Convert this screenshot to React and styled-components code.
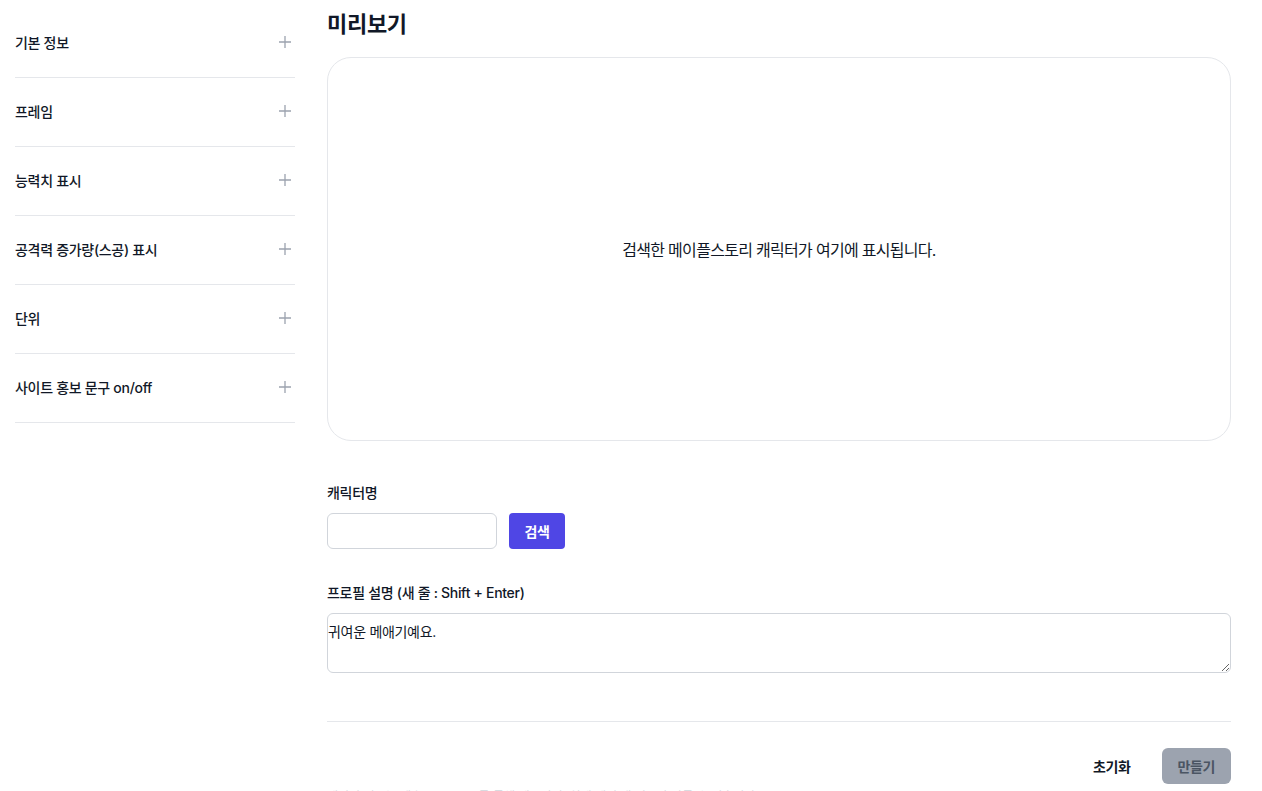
import React, { useState } from 'react';
import styled, { createGlobalStyle } from 'styled-components';

const GlobalStyle = createGlobalStyle`
  body {
    margin: 0;
    background: #fff;
    color: #111827;
    font-family: Inter, "Noto Sans CJK KR", "Noto Sans", sans-serif;
  }
  * { box-sizing: border-box; }
`;

const Layout = styled.div`
  display: grid;
  grid-template-columns: 280px 1fr;
  gap: 32px;
  padding: 8px 31px 0 15px;
`;

const Sidebar = styled.aside`
  display: flex;
  flex-direction: column;
  padding-top: 1px;
`;

const SectionRow = styled.button`
  display: flex;
  align-items: center;
  justify-content: space-between;
  height: 69px;
  padding: 0 0 3px;
  border: none;
  border-bottom: 1px solid #e5e7eb;
  background: transparent;
  font-family: inherit;
  font-size: 14px;
  font-weight: 500;
  letter-spacing: -0.3px;
  color: #111827;
  cursor: pointer;
  text-align: left;
`;

const PlusIcon = styled.svg`
  width: 14px;
  height: 14px;
  margin-right: 3px;
  color: #9ca3af;
`;

const Main = styled.main`
  display: flex;
  flex-direction: column;
`;

const Title = styled.h2`
  margin: 0;
  font-size: 22px;
  line-height: 32px;
  font-weight: 700;
  letter-spacing: -0.3px;
  color: #111827;
`;

const Preview = styled.div`
  margin-top: 17px;
  height: 384px;
  border: 1px solid #e5e7eb;
  border-radius: 24px;
  display: flex;
  align-items: center;
  justify-content: center;
  font-size: 16px;
  letter-spacing: -0.7px;
  color: #111827;
`;

const Field = styled.div`
  display: flex;
  flex-direction: column;
  gap: 10px;
  margin-top: ${p => p.$top}px;
`;

const Label = styled.label`
  font-size: 14px;
  line-height: 20px;
  font-weight: 500;
  letter-spacing: -0.3px;
  color: #111827;
`;

const InputRow = styled.div`
  display: flex;
  gap: 12px;
`;

const TextInput = styled.input`
  width: 170px;
  height: 36px;
  border: 1px solid #d1d5db;
  border-radius: 6px;
  padding: 0 10px;
  font-family: inherit;
  font-size: 14px;
`;

const SearchButton = styled.button`
  width: 56px;
  height: 36px;
  border: none;
  border-radius: 4px;
  background: #4f46e5;
  color: #fff;
  font-family: inherit;
  font-size: 14px;
  font-weight: 700;
  letter-spacing: -0.3px;
  cursor: pointer;
`;

const TextArea = styled.textarea`
  width: 100%;
  height: 60px;
  border: 1px solid #d1d5db;
  border-radius: 6px;
  padding: 8px 0 0 0;
  font-family: inherit;
  font-size: 14px;
  line-height: 20px;
  letter-spacing: -0.3px;
  color: #111827;
`;

const Divider = styled.hr`
  margin: 48px 0 0;
  border: none;
  border-top: 1px solid #e5e7eb;
`;

const Actions = styled.div`
  display: flex;
  justify-content: flex-end;
  align-items: center;
  gap: 15px;
  margin-top: 26px;
`;

const ActionButton = styled.button`
  height: 36px;
  padding: 0 16px;
  border: none;
  border-radius: 6px;
  font-family: inherit;
  font-size: 14px;
  font-weight: 600;
  letter-spacing: -0.4px;
  background: ${p => (p.$primary ? '#9ca3af' : 'transparent')};
  color: ${p => (p.$primary ? '#4b5563' : '#111827')};
  cursor: ${p => (p.$primary ? 'not-allowed' : 'pointer')};
`;

const Note = styled.p`
  margin: 4px 0 0;
  font-size: 12px;
  line-height: 18px;
  color: #d1d5db;
`;

const sections = [
  '기본 정보',
  '프레임',
  '능력치 표시',
  '공격력 증가량(스공) 표시',
  '단위',
  '사이트 홍보 문구 on/off',
];

const Plus = () => (
  <PlusIcon viewBox="0 0 14 14" fill="none" stroke="currentColor" strokeWidth="1.3">
    <path d="M7 1v12M1 7h12" />
  </PlusIcon>
);

const App = () => {
  const [name, setName] = useState('');
  const [desc, setDesc] = useState('귀여운 메애기예요.');

  return (
    <>
      <GlobalStyle />
      <Layout>
        <Sidebar>
          {sections.map(s => (
            <SectionRow key={s}>
              {s}
              <Plus />
            </SectionRow>
          ))}
        </Sidebar>
        <Main>
          <Title>미리보기</Title>
          <Preview>검색한 메이플스토리 캐릭터가 여기에 표시됩니다.</Preview>
          <Field $top={42}>
            <Label>캐릭터명</Label>
            <InputRow>
              <TextInput value={name} onChange={e => setName(e.target.value)} />
              <SearchButton>검색</SearchButton>
            </InputRow>
          </Field>
          <Field $top={34}>
            <Label>프로필 설명 (새 줄 : Shift + Enter)</Label>
            <TextArea value={desc} onChange={e => setDesc(e.target.value)} />
          </Field>
          <Divider />
          <Actions>
            <ActionButton>초기화</ActionButton>
            <ActionButton $primary disabled>만들기</ActionButton>
          </Actions>
          <Note>캐릭터 정보는 넥슨 Open API를 통해 제공되며, 실제 게임 내 정보와 다를 수 있습니다.</Note>
        </Main>
      </Layout>
    </>
  );
};

export default App;
